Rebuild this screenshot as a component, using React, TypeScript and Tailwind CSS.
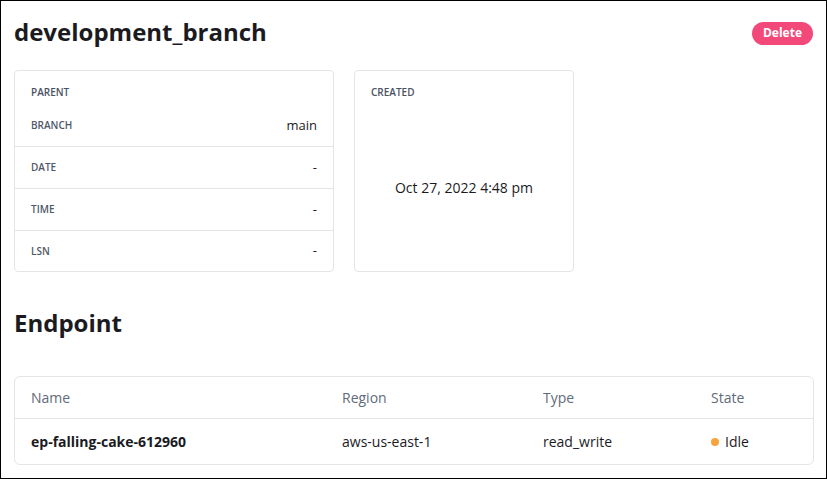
import React from 'react';

const parentRows = [
  { label: 'BRANCH', value: 'main' },
  { label: 'DATE', value: '-' },
  { label: 'TIME', value: '-' },
  { label: 'LSN', value: '-' },
];

const endpoints = [
  { name: 'ep-falling-cake-612960', region: 'aws-us-east-1', type: 'read_write', state: 'Idle' },
];

export default function App() {
  return (
    <div
      className="w-[827px] h-[479px] border border-black bg-white px-[13px] text-[#1b1b1f] overflow-hidden"
      style={{ fontFamily: '"Open Sans", "Noto Sans", sans-serif' }}
    >
      {/* Header */}
      <div className="flex items-center justify-between pt-[15px]">
        <h1 className="text-[24px] leading-[32px] font-bold">development_branch</h1>
        <button className="h-[23px] mt-[2px] px-[11px] rounded-full bg-[#f2497a] text-white text-[12px] font-bold leading-none">
          Delete
        </button>
      </div>

      {/* Cards */}
      <div className="flex gap-[20px] mt-[22px]">
        <div className="w-[320px] h-[202px] border border-[#e4e5e8] rounded-[4px] flex flex-col">
          <div className="h-[34px] px-4 pt-[15px] text-[10px] leading-[12px] font-semibold text-[#4a5262]">
            PARENT
          </div>
          {parentRows.map((row, i) => (
            <div
              key={row.label}
              className={`flex items-center justify-between px-4 ${
                i < parentRows.length - 1 ? 'h-[42px] border-b border-[#e4e5e8]' : 'flex-1'
              }`}
            >
              <span className="text-[10px] font-semibold text-[#4f5868]">{row.label}</span>
              <span className="text-[13px]">{row.value}</span>
            </div>
          ))}
        </div>

        <div className="w-[220px] h-[202px] border border-[#e4e5e8] rounded-[4px] flex flex-col">
          <div className="h-[34px] px-4 pt-[15px] text-[10px] leading-[12px] font-semibold text-[#4a5262]">
            CREATED
          </div>
          <div className="flex-1 flex items-center justify-center pb-[2px] text-[14px]">Oct 27, 2022 4:48 pm</div>
        </div>
      </div>

      {/* Endpoint */}
      <h2 className="mt-[35px] text-[24px] leading-[32px] font-bold">Endpoint</h2>

      <div className="mt-[37px] w-[800px] border border-[#e4e5e8] rounded-[6px]">
        <div className="grid grid-cols-[311px_201px_168px_1fr] px-4 h-[42px] items-center border-b border-[#e4e5e8] text-[14px] text-[#5f6b7a]">
          <span>Name</span>
          <span>Region</span>
          <span>Type</span>
          <span>State</span>
        </div>
        {endpoints.map((ep) => (
          <div
            key={ep.name}
            className="grid grid-cols-[311px_201px_168px_1fr] px-4 h-[45px] items-center text-[14px]"
          >
            <span className="font-bold">{ep.name}</span>
            <span>{ep.region}</span>
            <span>{ep.type}</span>
            <span className="flex items-center gap-[6px] font-medium">
              <span className="w-[8px] h-[8px] rounded-full bg-[#f8a33c]" />
              {ep.state}
            </span>
          </div>
        ))}
      </div>
    </div>
  );
}
